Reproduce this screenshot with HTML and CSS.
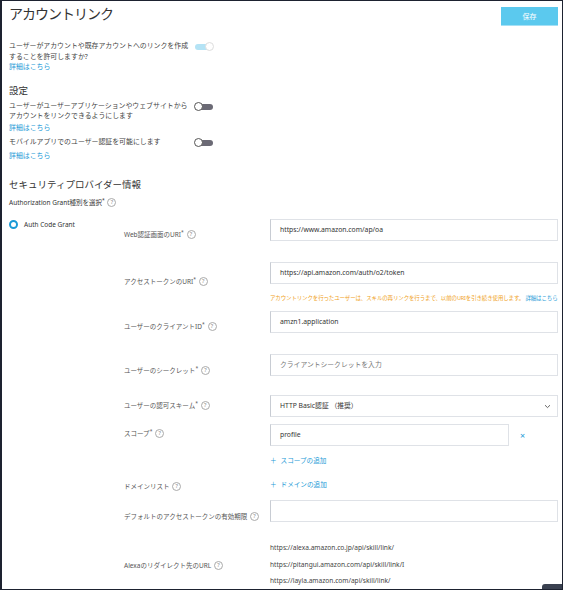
FILE: index.html
```html
<!DOCTYPE html>
<html lang="ja">
<head>
    <meta charset="UTF-8">
    <title>アカウントリンク</title>
    <link rel="stylesheet" href="styles.css">
</head>
<body>
    <div class="frame">
        <!-- Header -->
        <div class="header">
            <h1>アカウントリンク</h1>
            <button type="button" class="save-btn">保存</button>
        </div>

        <div class="setting first">
            <div class="setting-text">
                <p>ユーザーがアカウントや既存アカウントへのリンクを作成<br>することを許可しますか?</p>
                <a href="#" class="link">詳細はこちら</a>
            </div>
            <span class="toggle on"><span class="knob"></span></span>
        </div>

        <h2 class="section-title">設定</h2>

        <div class="setting second">
            <div class="setting-text">
                <p>ユーザーがユーザーアプリケーションやウェブサイトから<br>アカウントをリンクできるようにします</p>
                <a href="#" class="link">詳細はこちら</a>
            </div>
            <span class="toggle"><span class="knob"></span></span>
        </div>

        <div class="setting third">
            <div class="setting-text">
                <p>モバイルアプリでのユーザー認証を可能にします</p>
                <a href="#" class="link">詳細はこちら</a>
            </div>
            <span class="toggle"><span class="knob"></span></span>
        </div>

        <h2 class="section-title security">セキュリティプロバイダー情報</h2>
        <div class="grant-label">Authorization Grant種別を選択<sup>*</sup> <span class="help">?</span></div>

        <div class="grant">
            <div class="grant-type">
                <span class="radio"></span>
                <span>Auth Code Grant</span>
            </div>

            <div class="fields">
                <div class="field r1">
                    <div class="field-label">Web認証画面のURI<sup>*</sup> <span class="help">?</span></div>
                    <div class="field-control">
                        <div class="input">https://www.amazon.com/ap/oa</div>
                    </div>
                </div>

                <div class="field r2">
                    <div class="field-label">アクセストークンのURI<sup>*</sup> <span class="help">?</span></div>
                    <div class="field-control">
                        <div class="input">https://api.amazon.com/auth/o2/token</div>
                        <p class="hint">アカウントリンクを行ったユーザーは、スキルの再リンクを行うまで、以前のURIを引き続き使用します。 <a href="#" class="link">詳細はこちら</a></p>
                    </div>
                </div>

                <div class="field r3">
                    <div class="field-label">ユーザーのクライアントID<sup>*</sup> <span class="help">?</span></div>
                    <div class="field-control">
                        <div class="input">amzn1.application</div>
                    </div>
                </div>

                <div class="field r4">
                    <div class="field-label">ユーザーのシークレット<sup>*</sup> <span class="help">?</span></div>
                    <div class="field-control">
                        <div class="input placeholder">クライアントシークレットを入力</div>
                    </div>
                </div>

                <div class="field r5">
                    <div class="field-label">ユーザーの認可スキーム<sup>*</sup> <span class="help">?</span></div>
                    <div class="field-control">
                        <div class="input select">HTTP Basic認証 （推奨）
                            <svg class="chevron" width="7" height="5" viewBox="0 0 7 5"><path d="M1 1.2 L3.5 3.6 L6 1.2" fill="none" stroke="#555" stroke-width="0.9"/></svg>
                        </div>
                    </div>
                </div>

                <div class="field r6">
                    <div class="field-label">スコープ<sup>*</sup> <span class="help">?</span></div>
                    <div class="field-control">
                        <div class="scope-row">
                            <div class="input scope">profile</div>
                            <span class="remove">×</span>
                        </div>
                        <a href="#" class="add">＋<span>スコープの追加</span></a>
                    </div>
                </div>

                <div class="field r7">
                    <div class="field-label">ドメインリスト <span class="help">?</span></div>
                    <div class="field-control">
                        <a href="#" class="add">＋<span>ドメインの追加</span></a>
                    </div>
                </div>

                <div class="field r8">
                    <div class="field-label">デフォルトのアクセストークンの有効期限 <span class="help">?</span></div>
                    <div class="field-control">
                        <div class="input"></div>
                    </div>
                </div>

                <div class="field r9">
                    <div class="field-label">Alexaのリダイレクト先のURL <span class="help">?</span></div>
                    <div class="field-control urls">
                        <p>https://alexa.amazon.co.jp/api/skill/link/</p>
                        <p>https://pitangui.amazon.com/api/skill/link/I</p>
                        <p>https://layla.amazon.com/api/skill/link/</p>
                    </div>
                </div>
            </div>
        </div>

        <span class="chat-tab"></span>
    </div>
</body>
</html>
```

FILE: styles.css
```css
/* General Page Styles */
body {
    margin: 0;
    padding: 0;
    background: #ffffff;
    font-family: "Noto Sans", "Noto Sans CJK JP", sans-serif;
    color: #444;
    font-size: 7px;
}

p {
    margin: 0;
}

/* Outer frame */
.frame {
    position: relative;
    box-sizing: border-box;
    width: 563px;
    height: 590px;
    border: 1px solid #1d2230;
    border-left-width: 2px;
    padding: 0 4px 0 7px;
    overflow: hidden;
}

/* Header */
.header {
    display: flex;
    justify-content: space-between;
    align-items: flex-start;
    height: 25px;
}

h1 {
    margin: 3px 0 0;
    font-size: 14px;
    line-height: 19px;
    font-weight: 400;
    color: #333;
    letter-spacing: -1px;
}

.save-btn {
    margin-top: 6px;
    width: 57px;
    height: 19px;
    border: none;
    border-bottom: 1px solid #a5e0f5;
    background-color: #5bc9ee;
    color: #fff;
    font-family: inherit;
    font-size: 7px;
    cursor: pointer;
}

/* Settings rows */
.setting {
    display: flex;
    align-items: flex-start;
}

.setting.first { margin-top: 15px; }
.setting.second { margin-top: 4px; }
.setting.third { margin-top: 4px; }

.setting-text {
    width: 186px;
    font-size: 6.9px;
    line-height: 10.5px;
    white-space: nowrap;
}

.link {
    color: #1e9bd7;
    text-decoration: none;
}

.setting-text .link {
    display: block;
    margin-top: 0;
}

.setting.second .link { margin-top: 1px; }
.setting.third .link { margin-top: 3px; }

.section-title {
    margin: 11px 0 0;
    font-size: 9.5px;
    line-height: 13px;
    font-weight: 400;
    color: #333;
}

.section-title.security {
    margin-top: 17px;
}

/* Toggle switch */
.toggle {
    position: relative;
    display: inline-block;
    width: 18px;
    height: 6px;
    margin-top: 3px;
    border-radius: 3px;
    background-color: #6b6a75;
}

.toggle .knob {
    position: absolute;
    left: -1px;
    top: -2px;
    width: 9px;
    height: 9px;
    box-sizing: border-box;
    border: 1px solid #555;
    border-radius: 50%;
    background-color: #fff;
}

.toggle.on {
    background-color: #b4e3f5;
}

.toggle.on .knob {
    left: auto;
    right: -1px;
    border-color: #ddd;
}

/* Help icon */
.help {
    display: inline-block;
    width: 7px;
    height: 7px;
    line-height: 7px;
    margin-left: 1px;
    border: 1px solid #aaa;
    border-radius: 50%;
    font-size: 5.5px;
    text-align: center;
    color: #888;
    vertical-align: top;
}

sup {
    font-size: 5px;
    line-height: 0;
}

.grant-label {
    margin-top: 7px;
    font-size: 6.5px;
    line-height: 10px;
    color: #333;
}

/* Auth Code Grant block */
.grant {
    display: flex;
    margin-top: 11px;
}

.grant-type {
    flex-shrink: 0;
    display: flex;
    align-items: center;
    gap: 6px;
    width: 115px;
    height: 10px;
    font-size: 6.5px;
    color: #333;
}

.radio {
    box-sizing: border-box;
    width: 9px;
    height: 9px;
    border: 2.5px solid #1a9ad6;
    border-radius: 50%;
    background: #fff;
}

.fields {
    flex: 1;
    min-width: 0;
}

.field {
    display: flex;
    align-items: flex-start;
}

.field-label {
    flex-shrink: 0;
    width: 146px;
    font-size: 6.5px;
    line-height: 10px;
    color: #555;
    white-space: nowrap;
}

.field-control {
    flex: 1;
    min-width: 0;
}

.input {
    position: relative;
    box-sizing: border-box;
    height: 22px;
    line-height: 20px;
    padding-left: 9px;
    border: 1px solid #dfe2e7;
    border-left-color: #c8ccd3;
    background: #fff;
    font-size: 6.8px;
    color: #333;
}

.input.placeholder {
    color: #777;
}

.select .chevron {
    position: absolute;
    right: 6px;
    top: 8px;
}

.hint {
    margin: 9px 0 0;
    font-size: 5.5px;
    line-height: 10px;
    color: #f0a21c;
    white-space: nowrap;
    letter-spacing: -0.15px;
}

.scope-row {
    display: flex;
    align-items: center;
}

.input.scope {
    width: 239px;
    flex: none;
}

.remove {
    margin-left: 11px;
    color: #1e9bd7;
    font-size: 9px;
}

.add {
    display: block;
    margin-top: 10px;
    font-size: 6.6px;
    line-height: 10px;
    color: #1e9bd7;
    text-decoration: none;
}

.add span {
    margin-left: 4px;
}

.urls p {
    font-size: 6.6px;
    line-height: 16.7px;
}

/* Row spacing */
.r1 .field-label { padding-top: 11px; }

.r2 { margin-top: 21px; }
.r2 .field-label { padding-top: 15px; }

.r3 { margin-top: 8px; }
.r3 .field-label { padding-top: 11px; }

.r4 { margin-top: 21px; }
.r4 .field-label { padding-top: 12px; }

.r5 { margin-top: 19px; }
.r5 .field-label { padding-top: 6px; }

.r6 { margin-top: 7px; }
.r6 .field-label { padding-top: 5px; }

.r7 { margin-top: 12px; }
.r7 .field-label { padding-top: 4px; }
.r7 .add { margin-top: 0; padding-top: 2px; }

.r8 { margin-top: 8px; }
.r8 .field-label { padding-top: 12px; }

.r9 { margin-top: 18px; }
.r9 .field-label { padding-top: 21px; }

/* Chat tab peeking at bottom right */
.chat-tab {
    position: absolute;
    right: 0;
    bottom: 0;
    width: 20px;
    height: 5px;
    border-radius: 3px 0 0 0;
    background-color: #3a4150;
}
```
